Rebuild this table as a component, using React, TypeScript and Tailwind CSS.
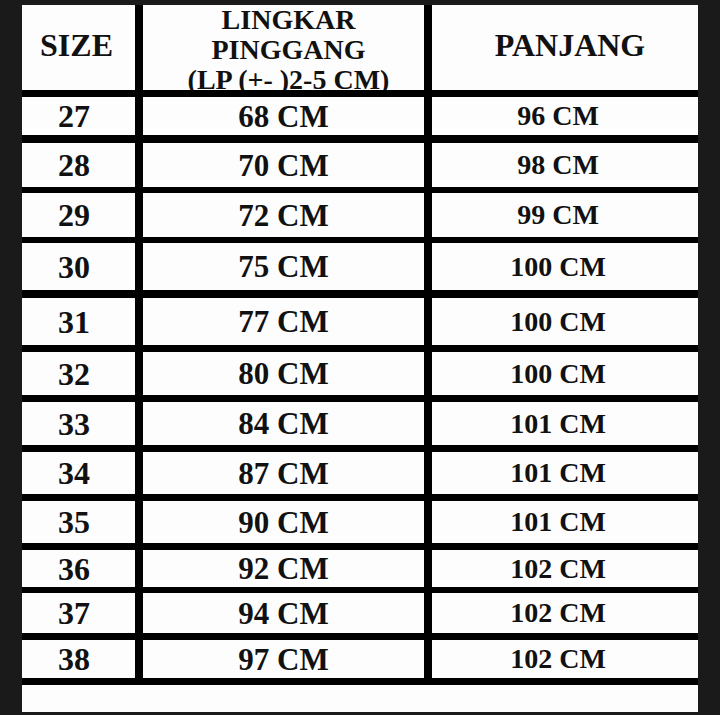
import React from "react";

const rows: { size: string; lp: string; p: string; cls: string }[] = [
  { size: "27", lp: "68 CM", p: "96 CM", cls: "h-[38px] mt-[7px]" },
  { size: "28", lp: "70 CM", p: "98 CM", cls: "h-[44px] mt-[8px]" },
  { size: "29", lp: "72 CM", p: "99 CM", cls: "h-[44px] mt-[6px]" },
  { size: "30", lp: "75 CM", p: "100 CM", cls: "h-[47px] mt-[6px]" },
  { size: "31", lp: "77 CM", p: "100 CM", cls: "h-[47px] mt-[8px]" },
  { size: "32", lp: "80 CM", p: "100 CM", cls: "h-[43px] mt-[7px]" },
  { size: "33", lp: "84 CM", p: "101 CM", cls: "h-[43px] mt-[7px]" },
  { size: "34", lp: "87 CM", p: "101 CM", cls: "h-[42px] mt-[7px]" },
  { size: "35", lp: "90 CM", p: "101 CM", cls: "h-[42px] mt-[7px]" },
  { size: "36", lp: "92 CM", p: "102 CM", cls: "h-[37px] mt-[7px]" },
  { size: "37", lp: "94 CM", p: "102 CM", cls: "h-[40px] mt-[6px]" },
  { size: "38", lp: "97 CM", p: "102 CM", cls: "h-[38px] mt-[7px]" },
];

export default function App() {
  return (
    <div className="w-[720px] h-[715px] bg-[#1a1a1a] pt-[5px] pl-[22px] overflow-hidden font-serif">
      <div className="w-[676px] bg-black flex flex-col font-['Liberation_Serif'] font-bold text-[#111]">
        <div className="grid grid-cols-[113px_281px_266px] gap-x-[8px] h-[85px]">
          <div className="bg-[#fdfdfd] flex items-center justify-center pb-[5px] pr-[4px] text-[32px] leading-none">
            SIZE
          </div>
          <div className="bg-[#fdfdfd] overflow-hidden flex flex-col items-center pl-[10px] text-[28px] leading-[30px]">
            <span>LINGKAR</span>
            <span>PINGGANG</span>
            <span className="whitespace-nowrap">(LP (+- )2-5 CM)</span>
          </div>
          <div className="bg-[#fdfdfd] flex items-center justify-center pb-[5px] pl-[10px] text-[32px] leading-none">
            PANJANG
          </div>
        </div>
        {rows.map((r) => (
          <div
            key={r.size}
            className={`grid grid-cols-[113px_281px_266px] gap-x-[8px] ${r.cls}`}
          >
            <div className="bg-[#fdfdfd] flex items-center justify-center pr-[9px] text-[32px] leading-none">
              {r.size}
            </div>
            <div className="bg-[#fdfdfd] flex items-center justify-center text-[31px] leading-none">
              {r.lp}
            </div>
            <div className="bg-[#fdfdfd] flex items-center justify-center pr-[14px] text-[28px] leading-none">
              {r.p}
            </div>
          </div>
        ))}
        <div className="bg-[#fdfdfd] h-[27px] mt-[7px]" />
      </div>
    </div>
  );
}
